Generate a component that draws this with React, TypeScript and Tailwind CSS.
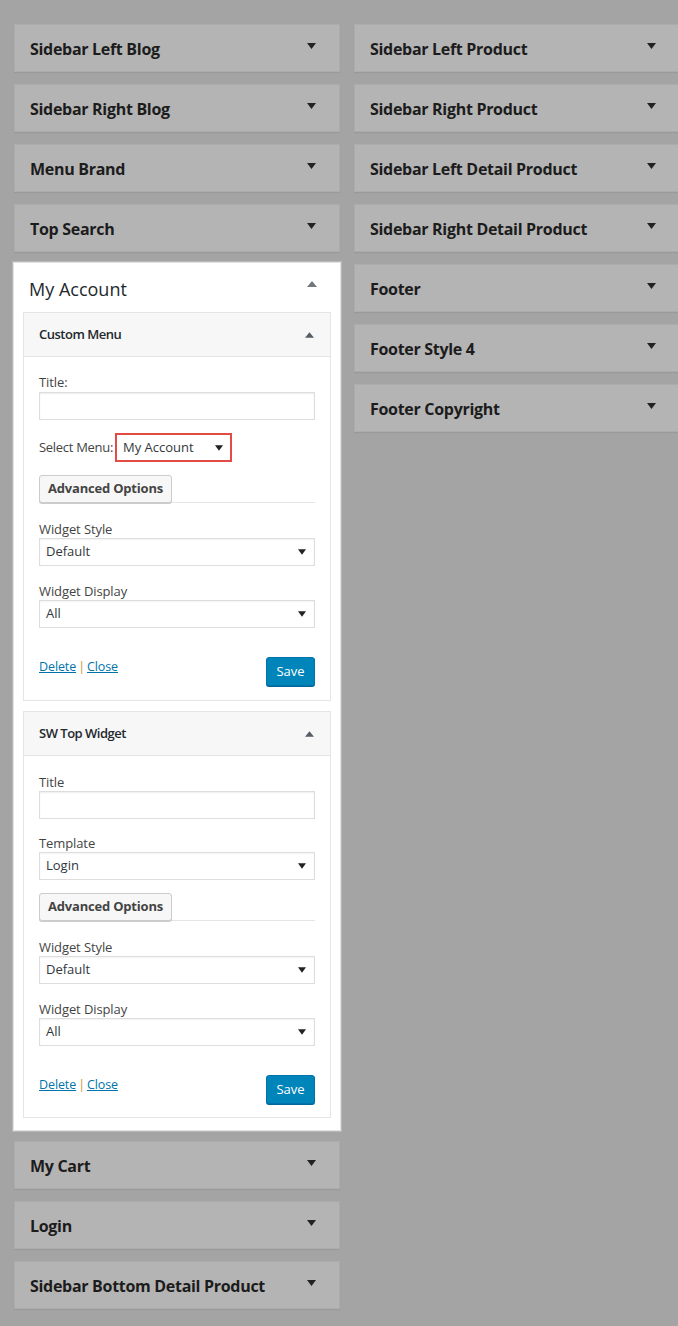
import React from "react";

const font = { fontFamily: '"Open Sans", "Noto Sans", sans-serif' };

function Down({ cls = "" }: { cls?: string }) {
  return (
    <svg width="9" height="6" viewBox="0 0 9 6" className={cls}>
      <polygon points="0,0 9,0 4.5,6" fill="currentColor" />
    </svg>
  );
}
function Up({ cls = "" }: { cls?: string }) {
  return (
    <svg width="10" height="6" viewBox="0 0 10 6" className={cls}>
      <polygon points="0,6 10,6 5,0" fill="currentColor" />
    </svg>
  );
}

function Collapsed({ title }: { title: string }) {
  return (
    <div className="h-[48px] w-[326px] shrink-0 bg-[#b4b4b4] border border-[#acacac] shadow-[0_1px_1px_rgba(0,0,0,0.06)] flex items-center pl-[15px] pr-[23px]">
      <span className="flex-1 pt-[2px] text-[16px] font-bold text-[#1c1c1c] tracking-[-0.3px]">{title}</span>
      <Down cls="text-[#222] -mt-[5px]" />
    </div>
  );
}

function Select({ value }: { value: string }) {
  return (
    <div className="h-[28px] w-full border border-[#ddd] bg-white flex items-center pl-[6px] pr-[8px] shadow-[inset_0_1px_2px_rgba(0,0,0,0.05)]">
      <span className="flex-1 text-[13px] text-[#32373c]">{value}</span>
      <Down cls="text-[#222] w-[8px] h-[6px]" />
    </div>
  );
}

function Label({ text }: { text: string }) {
  return <div className="text-[13px] leading-[18px] text-[#444] tracking-[-0.1px]">{text}</div>;
}

function AdvRow({ mt }: { mt: string }) {
  return (
    <div className={`${mt} border-b border-[#e5e5e5] flex`}>
      <div className="h-[28px] px-[8px] bg-[#f7f7f7] border border-[#ccc] rounded-[3px] shadow-[0_1px_0_#ccc] flex items-center text-[13px] font-bold text-[#444] tracking-[-0.2px] -mb-px">
        Advanced Options
      </div>
    </div>
  );
}

function Footer({ mt }: { mt: string }) {
  return (
    <div className={`${mt} flex items-start justify-between`}>
      <div className="text-[12.5px] pt-[1px] flex tracking-[-0.1px]">
        <span className="text-[#0073aa] underline">Delete</span>
        <span className="text-[#c8943e] mx-[2px]">|</span>
        <span className="text-[#0073aa] underline">Close</span>
      </div>
      <div className="h-[29px] w-[49px] bg-[#0085ba] border border-[#0073aa] rounded-[3px] shadow-[0_1px_0_#006799] text-white text-[13px] flex items-center justify-center">
        Save
      </div>
    </div>
  );
}

function WidgetHeader({ title }: { title: string }) {
  return (
    <div className="h-[44px] bg-[#f7f7f7] border-b border-[#e5e5e5] flex items-center pl-[15px] pr-[16px]">
      <span className="flex-1 text-[13px] font-semibold text-[#23282d] tracking-[-0.5px]">{title}</span>
      <Up cls="text-[#555d66] w-[9px]" />
    </div>
  );
}

export default function App() {
  return (
    <div style={font} className="w-[678px] h-[1326px] bg-[#a4a4a4] overflow-hidden flex gap-[14px] pl-[14px] pt-[24px]">
      {/* Left column */}
      <div className="w-[326px] shrink-0 flex flex-col gap-[12px]">
        <Collapsed title="Sidebar Left Blog" />
        <Collapsed title="Sidebar Right Blog" />
        <Collapsed title="Menu Brand" />
        <Collapsed title="Top Search" />

        <div className="-my-[2px] -mx-px w-[328px] bg-white border border-[#e2e2e2] outline outline-1 outline-[#b8b8b8] px-[9px] pb-[12px]">
          <div className="h-[49px] flex items-center pl-[6px] pr-[14px]">
            <span className="flex-1 pt-[3px] text-[18px] text-[#23282d]">My Account</span>
            <Up cls="text-[#72777c] -mt-[8px]" />
          </div>

          {/* Custom Menu */}
          <div className="border border-[#e5e5e5] bg-white">
            <WidgetHeader title="Custom Menu" />
            <div className="px-[15px] pt-[16px] pb-[14px]">
              <Label text="Title:" />
              <div className="mt-[1px] h-[28px] border border-[#ddd] shadow-[inset_0_1px_2px_rgba(0,0,0,0.07)]" />
              <div className="mt-[13px] flex items-center">
                <span className="text-[13px] text-[#444] mr-[2px] tracking-[-0.3px]">Select Menu:</span>
                <div className="h-[29px] w-[117px] border-2 border-[#e24c45] flex items-center pl-[6px] pr-[7px]">
                  <span className="flex-1 text-[13px] text-[#32373c]">My Account</span>
                  <Down cls="text-[#222] w-[8px] h-[6px]" />
                </div>
              </div>
              <AdvRow mt="mt-[13px]" />
              <div className="mt-[17px]">
                <Label text="Widget Style" />
                <Select value="Default" />
              </div>
              <div className="mt-[16px]">
                <Label text="Widget Display" />
                <Select value="All" />
              </div>
              <Footer mt="mt-[29px]" />
            </div>
          </div>

          {/* SW Top Widget */}
          <div className="mt-[10px] border border-[#e5e5e5] bg-white">
            <WidgetHeader title="SW Top Widget" />
            <div className="px-[15px] pt-[17px] pb-[13px]">
              <Label text="Title" />
              <div className="mt-[0px] h-[28px] border border-[#ddd] shadow-[inset_0_1px_2px_rgba(0,0,0,0.07)]" />
              <div className="mt-[15px]">
                <Label text="Template" />
                <Select value="Login" />
              </div>
              <AdvRow mt="mt-[13px]" />
              <div className="mt-[17px]">
                <Label text="Widget Style" />
                <Select value="Default" />
              </div>
              <div className="mt-[16px]">
                <Label text="Widget Display" />
                <Select value="All" />
              </div>
              <Footer mt="mt-[29px]" />
            </div>
          </div>
        </div>

        <Collapsed title="My Cart" />
        <Collapsed title="Login" />
        <Collapsed title="Sidebar Bottom Detail Product" />
      </div>

      {/* Right column */}
      <div className="w-[326px] shrink-0 flex flex-col gap-[12px]">
        <Collapsed title="Sidebar Left Product" />
        <Collapsed title="Sidebar Right Product" />
        <Collapsed title="Sidebar Left Detail Product" />
        <Collapsed title="Sidebar Right Detail Product" />
        <Collapsed title="Footer" />
        <Collapsed title="Footer Style 4" />
        <Collapsed title="Footer Copyright" />
      </div>
    </div>
  );
}
